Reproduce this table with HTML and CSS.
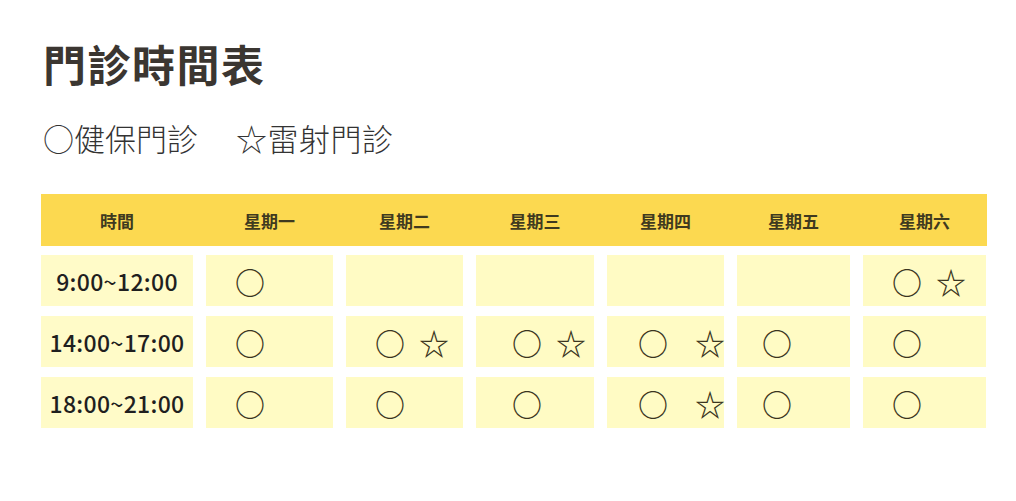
FILE: index.html
```html
<!DOCTYPE html>
<html lang="zh-Hant">
<head>
<meta charset="utf-8">
<title>門診時間表</title>
<link rel="stylesheet" href="styles.css">
</head>
<body>
<main class="page">
  <h1 class="title">門診時間表</h1>
  <p class="legend"><span class="legend-item">○健保門診</span><span class="legend-item">☆雷射門診</span></p>
  <section class="schedule">
    <div class="head">
      <div class="hcell">時間</div>
      <div class="hcell">星期一</div>
      <div class="hcell">星期二</div>
      <div class="hcell">星期三</div>
      <div class="hcell">星期四</div>
      <div class="hcell">星期五</div>
      <div class="hcell">星期六</div>
    </div>
    <div class="row">
      <div class="cell time">9:00~12:00</div>
      <div class="cell"><span class="sym">○</span></div>
      <div class="cell"></div>
      <div class="cell"></div>
      <div class="cell"></div>
      <div class="cell"></div>
      <div class="cell"><span class="sym">○</span><span class="sym">☆</span></div>
    </div>
    <div class="row">
      <div class="cell time">14:00~17:00</div>
      <div class="cell"><span class="sym">○</span></div>
      <div class="cell"><span class="sym">○</span><span class="sym">☆</span></div>
      <div class="cell wed"><span class="sym">○</span><span class="sym">☆</span></div>
      <div class="cell thu"><span class="sym">○</span><span class="sym">☆</span></div>
      <div class="cell fri"><span class="sym">○</span></div>
      <div class="cell"><span class="sym">○</span></div>
    </div>
    <div class="row">
      <div class="cell time">18:00~21:00</div>
      <div class="cell"><span class="sym">○</span></div>
      <div class="cell"><span class="sym">○</span></div>
      <div class="cell wed"><span class="sym">○</span></div>
      <div class="cell thu"><span class="sym">○</span><span class="sym">☆</span></div>
      <div class="cell fri"><span class="sym">○</span></div>
      <div class="cell"><span class="sym">○</span></div>
    </div>
  </section>
</main>
</body>
</html>
```
FILE: styles.css
```css
* { box-sizing: border-box; }
body {
  margin: 0;
  background: #ffffff;
  font-family: "Noto Sans CJK TC", "Noto Sans", sans-serif;
  color: #333;
}
.page {
  padding: 33px 0 0 43px;
  width: 988px;
}
.title {
  margin: 0;
  font-size: 43px;
  line-height: 60px;
  font-weight: 700;
  color: #3b3631;
  letter-spacing: 1.5px;
}
.legend {
  margin: 23px 0 0 0;
  font-size: 31px;
  line-height: 44px;
  font-weight: 300;
  color: #333;
  display: flex;
  gap: 38px;
}
.legend-item:last-child { letter-spacing: 0.5px; }
.schedule {
  margin-top: 34px;
  width: 946px;
  margin-left: -2px;
}
.head, .row {
  display: grid;
  grid-template-columns: 152px 127px 117px 118px 117px 113px 123px;
  column-gap: 13px;
}
.head {
  background: #fcd950;
  height: 52px;
  align-items: center;
  margin-bottom: 9px;
}
.hcell {
  text-align: center;
  font-size: 17px;
  font-weight: 700;
  color: #3f3a1f;
}
.row {
  height: 51px;
  margin-bottom: 10px;
}
.cell {
  background: #fffbc4;
  display: flex;
  align-items: center;
  padding-left: 29px;
  gap: 14px;
}
.cell.time {
  justify-content: center;
  padding-left: 0;
  font-size: 23px;
  font-weight: 500;
  letter-spacing: 0.3px;
  color: #1f1f1f;
  background: #fffbc8;
}
.cell.wed { padding-left: 36px; }
.cell.thu { padding-left: 31px; gap: 27px; }
.cell.fri { padding-left: 25px; }
.sym {
  font-size: 30px;
  line-height: 1;
  font-weight: 500;
  color: #3a3420;
}
```
